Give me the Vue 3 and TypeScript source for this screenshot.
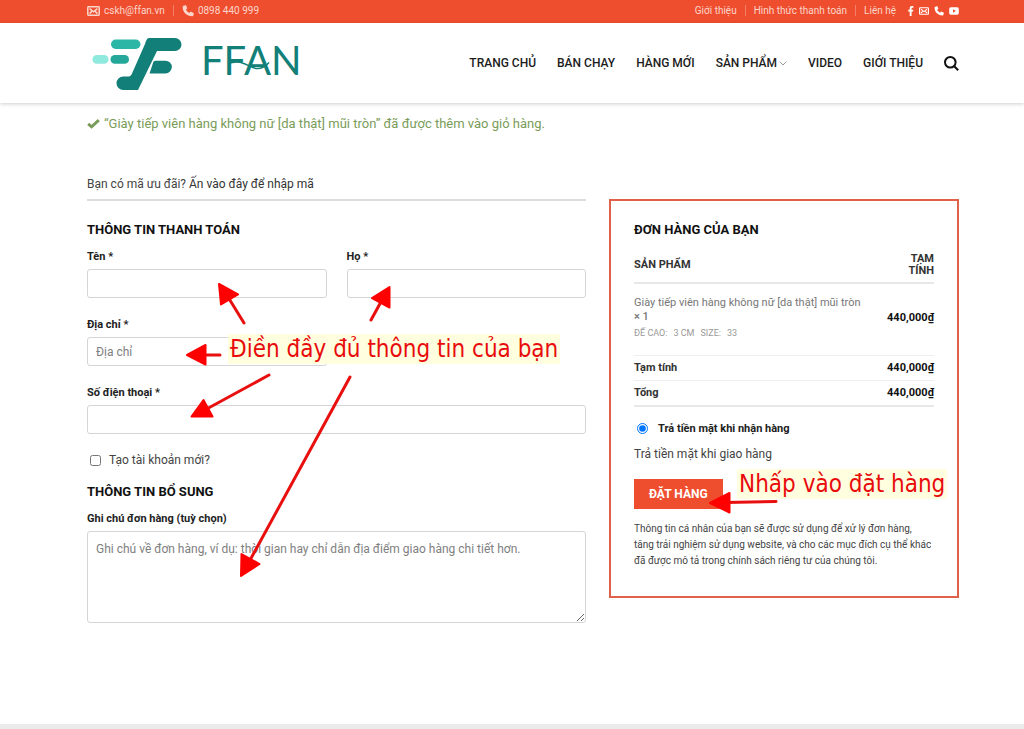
<script setup lang="ts">
import { ref } from 'vue'

interface NavItem {
  label: string
  hasMenu?: boolean
}

const navItems: NavItem[] = [
  { label: 'TRANG CHỦ' },
  { label: 'BÁN CHẠY' },
  { label: 'HÀNG MỚI' },
  { label: 'SẢN PHẨM', hasMenu: true },
  { label: 'VIDEO' },
  { label: 'GIỚI THIỆU' },
]
const topLinks: string[] = ['Giới thiệu', 'Hình thức thanh toán', 'Liên hệ']

const firstName = ref('')
const lastName = ref('')
const address = ref('')
const phone = ref('')
const notes = ref('')
const createAccount = ref(false)
const payment = ref('cod')
</script>

<template>
  <div class="page">
    <div class="topbar">
      <div class="container topbar-inner">
        <div class="top-group">
          <a href="#" class="top-contact">
            <svg class="icon-mail" viewBox="0 0 13 10" aria-hidden="true">
              <rect x="0.8" y="0.8" width="11.4" height="8.4" rx="0.6" />
              <path d="M2.6 2.6 6.5 5.8 10.4 2.6M2.6 7.6 4.8 5.4M10.4 7.6 8.2 5.4" />
            </svg>
            <span>cskh@ffan.vn</span>
          </a>
          <span class="sep"></span>
          <a href="#" class="top-contact">
            <svg class="icon-phone" viewBox="0 0 12 12" aria-hidden="true">
              <path d="M1.6.8 3.3.2c.4-.1.7 0 .9.4l.9 2.3c.1.3 0 .6-.2.8l-1 .9c.7 1.5 1.9 2.7 3.4 3.5l.9-1.1c.2-.3.6-.4.9-.2l2.3 1.1c.3.1.5.5.4.8l-.5 1.9c-.1.4-.4.7-.8.7C4.7 11.5.5 7.1.7 1.8c0-.5.4-.9.9-1Z" />
            </svg>
            <span>0898 440 999</span>
          </a>
        </div>
        <div class="top-group">
          <template v-for="(link, i) in topLinks" :key="link">
            <span v-if="i > 0" class="sep"></span>
            <a href="#">{{ link }}</a>
          </template>
          <div class="social">
            <a href="#" aria-label="Facebook">
              <svg class="icon-fb" viewBox="0 0 6 10" aria-hidden="true">
                <path d="M1.7 10V5.6H.2V3.8h1.5V2.5C1.7.9 2.6.1 4 .1c.7 0 1.2.1 1.4.1v1.6h-.9c-.8 0-.9.4-.9.9v1.1h1.7l-.2 1.8H3.6V10Z" />
              </svg>
            </a>
            <a href="#" aria-label="Email">
              <svg class="icon-small-mail" viewBox="0 0 13 10" aria-hidden="true">
                <rect x="0.8" y="0.8" width="11.4" height="8.4" rx="0.6" />
                <path d="M2.6 2.6 6.5 5.8 10.4 2.6M2.6 7.6 4.8 5.4M10.4 7.6 8.2 5.4" />
              </svg>
            </a>
            <a href="#" aria-label="Điện thoại">
              <svg class="icon-small-phone" viewBox="0 0 12 12" aria-hidden="true">
                <path d="M1.6.8 3.3.2c.4-.1.7 0 .9.4l.9 2.3c.1.3 0 .6-.2.8l-1 .9c.7 1.5 1.9 2.7 3.4 3.5l.9-1.1c.2-.3.6-.4.9-.2l2.3 1.1c.3.1.5.5.4.8l-.5 1.9c-.1.4-.4.7-.8.7C4.7 11.5.5 7.1.7 1.8c0-.5.4-.9.9-1Z" />
              </svg>
            </a>
            <a href="#" aria-label="YouTube">
              <svg class="icon-yt" viewBox="0 0 10 8" aria-hidden="true">
                <path fill-rule="evenodd" d="M2 .3h6a1.7 1.7 0 0 1 1.8 1.7v4A1.7 1.7 0 0 1 8 7.7H2A1.7 1.7 0 0 1 .2 6V2A1.7 1.7 0 0 1 2 .3ZM4 2.3v3.4L6.9 4Z" />
              </svg>
            </a>
          </div>
        </div>
      </div>
    </div>

    <header class="header">
      <div class="container header-inner">
        <a href="#" class="logo" aria-label="FFAN">
          <svg viewBox="0 0 216 56" class="logo-svg" aria-hidden="true">
            <rect x="24" y="4.5" width="29.5" height="9.5" rx="4.7" fill="#2bb6a6" />
            <rect x="5.5" y="20" width="16" height="8.8" rx="4.4" fill="#8fe9dd" />
            <rect x="23.5" y="20" width="18.5" height="8.8" rx="4.4" fill="#25a899" />
            <path fill="#128078" d="M62 3H88a6.5 6.5 0 0 1 0 13H70L51 55H36.2a6.7 6.7 0 0 1 0-13.4H41.5C43.5 41.6 44.5 40 45 38.5L58 9C59 6 60 3 62 3Z" />
            <path fill="#128078" d="M68.5 25.7H78.5a6.3 6.3 0 0 1 0 12.7H62.5L66 28C66.5 26.5 67 25.7 68.5 25.7Z" />
            <text x="114" y="39.5" class="wordmark">FFAN</text>
            <path class="swoosh" d="M141 28.5C155 23.5 161 32 169 33.5C175 34 179 31 182 27.5" />
          </svg>
        </a>
        <nav class="nav">
          <a v-for="item in navItems" :key="item.label" href="#">
            {{ item.label }}<svg v-if="item.hasMenu" class="chevron" viewBox="0 0 8 5" aria-hidden="true"><path d="M.7.7 4 4 7.3.7" /></svg>
          </a>
          <button type="button" class="search" aria-label="Tìm kiếm">
            <svg viewBox="0 0 15 15" aria-hidden="true">
              <circle cx="6.3" cy="6.3" r="5.3" />
              <path d="M10 10 14.2 14.2" />
            </svg>
          </button>
        </nav>
      </div>
    </header>

    <main class="container main">
      <p class="notice">
        <svg viewBox="0 0 13 11" class="check" aria-hidden="true"><path d="M1.2 4.8 4.6 7.8 11.8 1.2" /></svg>
        “Giày tiếp viên hàng không nữ [da thật] mũi tròn” đã được thêm vào giỏ hàng.
      </p>

      <p class="coupon">Bạn có mã ưu đãi? <a href="#">Ấn vào đây để nhập mã</a></p>

      <form class="checkout" @submit.prevent>
        <section class="billing">
          <h3>THÔNG TIN THANH TOÁN</h3>
          <div class="fields">
            <div class="field">
              <label for="first-name">Tên *</label>
              <input id="first-name" v-model="firstName" type="text" />
            </div>
            <div class="field">
              <label for="last-name">Họ *</label>
              <input id="last-name" v-model="lastName" type="text" />
            </div>
            <div class="field">
              <label for="address">Địa chỉ *</label>
              <input id="address" v-model="address" type="text" placeholder="Địa chỉ" />
            </div>
            <div class="field wide">
              <label for="phone">Số điện thoại *</label>
              <input id="phone" v-model="phone" type="tel" />
            </div>
          </div>
          <label class="account">
            <input v-model="createAccount" type="checkbox" />
            <span>Tạo tài khoản mới?</span>
          </label>
          <h3>THÔNG TIN BỔ SUNG</h3>
          <div class="field">
            <label for="notes">Ghi chú đơn hàng (tuỳ chọn)</label>
            <textarea id="notes" v-model="notes" placeholder="Ghi chú về đơn hàng, ví dụ: thời gian hay chỉ dẫn địa điểm giao hàng chi tiết hơn."></textarea>
          </div>
        </section>

        <section class="order">
          <h3>ĐƠN HÀNG CỦA BẠN</h3>
          <table>
            <thead>
              <tr><th scope="col">SẢN PHẨM</th><th scope="col" class="amount">TẠM<br />TÍNH</th></tr>
            </thead>
            <tbody>
              <tr class="product">
                <td>
                  <div class="product-name">Giày tiếp viên hàng không nữ [da thật] mũi tròn <b>× 1</b></div>
                  <dl>
                    <dt>ĐẾ CAO:</dt><dd>3 CM</dd>
                    <dt>SIZE:</dt><dd>33</dd>
                  </dl>
                </td>
                <td class="amount">440,000₫</td>
              </tr>
            </tbody>
            <tfoot>
              <tr><th scope="row">Tạm tính</th><td class="amount">440,000₫</td></tr>
              <tr><th scope="row">Tổng</th><td class="amount">440,000₫</td></tr>
            </tfoot>
          </table>
          <label class="payment">
            <input v-model="payment" type="radio" name="payment" value="cod" />
            <span>Trả tiền mặt khi nhận hàng</span>
          </label>
          <p class="payment-text">Trả tiền mặt khi giao hàng</p>
          <button type="submit" class="place">ĐẶT HÀNG</button>
          <p class="privacy">
            Thông tin cá nhân của bạn sẽ được sử dụng để xử lý đơn hàng, tăng trải nghiệm sử dụng website, và cho các mục đích cụ thể khác đã được mô tả trong <a href="#">chính sách riêng tư</a> của chúng tôi.
          </p>
        </section>
      </form>
    </main>

    <div class="footer-edge"></div>

    <span class="note note-fill">Điền đầy đủ thông tin của bạn</span>
    <span class="note note-order">Nhấp vào đặt hàng</span>
    <svg class="arrows" viewBox="0 0 1024 729" aria-hidden="true">
      <path d="M244 323 228 297M371 320 382 300M220 355H200M269 375 203 411M350 377 249 562M776 501.5 725 502.5" />
      <path class="heads" d="M219 284 238 294.5 221 304.5ZM389.5 287 389.5 307.5 372 298ZM187 355 205.5 345V364.5ZM191.5 416.5 203.5 400 212.5 416.5ZM241 576 241.5 554 259.5 564ZM710 503 729.5 493V512.5Z" />
    </svg>
  </div>
</template>

<style>
body {
  margin: 0;
}
</style>

<style scoped>
.page {
  position: relative;
  display: flex;
  flex-direction: column;
  min-height: 100vh;
  background: #fff;
  color: #444;
  font-family: Roboto, "Liberation Sans", sans-serif;
  font-size: 13px;
  line-height: 20px;
}
.page *,
.page {
  box-sizing: border-box;
}
a {
  color: inherit;
  text-decoration: none;
}
p,
h3,
dl,
dd {
  margin: 0;
}
.container {
  width: 100%;
  padding: 0 65px 0 87px;
}
.topbar {
  background: #ef4e2e;
  color: #fbd5ca;
  font-size: 10px;
}
.topbar-inner {
  display: flex;
  align-items: center;
  justify-content: space-between;
  height: 23px;
  padding-bottom: 2px;
}
.top-group,
.top-contact,
.social,
.social a {
  display: flex;
  align-items: center;
}
.top-group {
  gap: 8px;
}
.top-contact {
  gap: 4px;
}
.sep {
  width: 1px;
  height: 11px;
  background: #f47f68;
}
.social {
  gap: 5px;
  margin-left: 4px;
  color: #fff;
}
.topbar svg {
  fill: currentColor;
}
.icon-mail {
  width: 13px;
  height: 10px;
}
.topbar .icon-mail,
.topbar .icon-small-mail {
  fill: none;
  stroke: currentColor;
  stroke-width: 1.5;
}
.icon-small-mail {
  width: 10px;
  height: 8px;
}
.icon-phone {
  width: 12px;
  height: 12px;
}
.icon-small-phone {
  width: 10px;
  height: 10px;
}
.icon-fb {
  width: 6px;
  height: 10px;
}
.icon-yt {
  width: 10px;
  height: 8px;
}
.header {
  background: #fff;
  box-shadow: 0 1px 4px rgba(0, 0, 0, 0.2);
}
.header-inner {
  display: flex;
  align-items: center;
  justify-content: space-between;
  height: 80px;
}
.logo-svg {
  display: block;
  width: 216px;
  height: 56px;
}
.wordmark {
  font-family: Lato, sans-serif;
  font-size: 40px;
  fill: #128078;
}
.swoosh {
  fill: none;
  stroke: #128078;
  stroke-width: 1.5;
}
.nav {
  display: flex;
  align-items: center;
  gap: 21px;
  color: #1c1c1c;
  font-size: 12px;
  font-weight: 500;
}
.nav a {
  display: flex;
  align-items: center;
  white-space: nowrap;
}
.chevron {
  width: 8px;
  height: 5px;
  margin-left: 2px;
  fill: none;
  stroke: #999;
}
.search {
  display: flex;
  padding: 0;
  border: 0;
  background: none;
  color: #111;
}
.search svg {
  width: 15px;
  height: 15px;
  fill: none;
  stroke: currentColor;
  stroke-width: 2;
}
.main {
  flex: 1;
}
.notice {
  display: flex;
  align-items: center;
  gap: 4px;
  margin-top: 11px;
  color: #7a9c59;
}
.check {
  width: 13px;
  height: 11px;
  fill: none;
  stroke: currentColor;
  stroke-width: 3;
}
.coupon {
  margin-top: 40px;
  font-size: 12px;
}
.coupon a {
  color: #333;
}
.checkout {
  display: grid;
  grid-template-columns: 499fr 350fr;
  align-items: start;
  gap: 23px;
  margin-top: 5px;
}
.billing {
  padding-top: 19px;
  border-top: 2px solid #ddd;
}
h3 {
  color: #111;
  font-size: 13px;
  font-weight: 700;
  line-height: 20px;
}
.fields {
  display: grid;
  grid-template-columns: 1fr 1fr;
  gap: 18px 20px;
}
.billing h3 {
  margin-bottom: 8px;
}
.wide {
  grid-column: 1 / -1;
}
.field label {
  display: block;
  margin-bottom: 3px;
  color: #222;
  font-size: 11px;
  font-weight: 700;
  line-height: 18px;
}
.field input,
.field textarea {
  display: block;
  width: 100%;
  height: 29px;
  padding: 0 8px;
  border: 1px solid #d5d5d5;
  border-radius: 3px;
  background: #fff;
  color: #333;
  font-family: inherit;
  font-size: 12px;
}
.field textarea {
  height: 92px;
  padding: 8px;
  line-height: 18px;
}
.field ::placeholder {
  color: #808080;
}
.account {
  display: flex;
  align-items: center;
  margin: 16px 0 12px;
  font-size: 12px;
}
.account input {
  width: 11px;
  height: 11px;
  margin: 0 8px 0 3px;
}
.order {
  padding: 19px 23px 27px;
  border: 2px solid #e0604a;
}
table {
  width: 100%;
  margin-top: 13px;
  border-collapse: collapse;
}
th,
td {
  padding: 0;
  text-align: left;
}
thead th {
  padding-bottom: 5px;
  border-bottom: 2px solid #e8e8e8;
  color: #333;
  font-size: 11px;
  line-height: 12px;
}
.page .amount {
  text-align: right;
}
td.amount {
  color: #111;
  font-size: 11px;
  font-weight: 700;
}
.product td {
  padding: 12px 0 15px;
  border-bottom: 1px solid #eee;
}
.product-name {
  max-width: 236px;
  color: #777;
  font-size: 11px;
  line-height: 14px;
}
.product-name b {
  display: block;
  font-weight: 500;
}
dl {
  display: flex;
  gap: 6px;
  margin-top: 2px;
  color: #999;
  font-size: 9px;
  line-height: 14px;
}
tfoot th {
  color: #333;
  font-size: 11px;
}
tfoot th,
tfoot td {
  height: 25px;
  border-bottom: 1px solid #eee;
}
tfoot tr:last-child th,
tfoot tr:last-child td {
  border-bottom: 2px solid #e8e8e8;
}
.payment {
  display: flex;
  align-items: center;
  margin-top: 12px;
  color: #222;
  font-size: 11px;
  font-weight: 700;
}
.payment input {
  width: 11px;
  height: 11px;
  margin: 0 10px 0 3px;
}
.payment-text {
  margin-top: 5px;
  font-size: 12px;
}
.place {
  display: block;
  height: 30px;
  margin-top: 15px;
  padding: 0 15px;
  border: 0;
  background: #ef4e2e;
  color: #fff;
  font-family: inherit;
  font-size: 12px;
  font-weight: 700;
}
.privacy {
  margin-top: 12px;
  font-size: 10px;
  line-height: 16px;
}
.footer-edge {
  height: 5px;
  background: #ebebeb;
}
.note {
  position: absolute;
  padding: 0 2px;
  background: rgba(255, 255, 220, 0.92);
  color: #e80c0c;
  font-family: "DejaVu Sans Condensed", "DejaVu Sans", sans-serif;
  font-size: 24px;
  line-height: 30px;
  white-space: nowrap;
}
.note-fill {
  top: 334px;
  left: 228px;
}
.note-order {
  top: 469px;
  left: 737px;
}
.arrows {
  position: absolute;
  top: 0;
  left: 0;
  width: 1024px;
  height: 729px;
  fill: none;
  stroke: #e8100f;
  stroke-width: 3;
  stroke-linecap: round;
  stroke-linejoin: round;
  pointer-events: none;
}
.heads {
  fill: #f00;
  stroke: #f00;
  stroke-width: 2;
}
</style>
